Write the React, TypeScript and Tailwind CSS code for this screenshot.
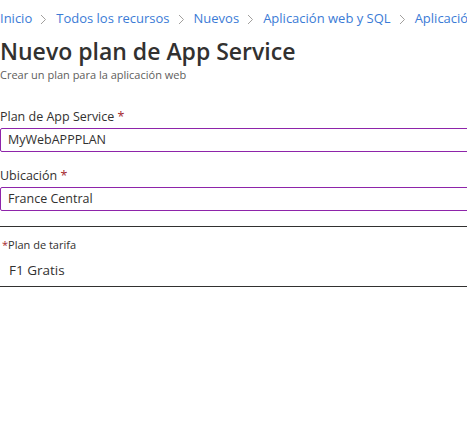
import React from "react";

const crumbs = ["Inicio", "Todos los recursos", "Nuevos", "Aplicación web y SQL", "Aplicación web"];

function Chevron() {
  return (
    <svg width="7" height="11" viewBox="0 0 7 11" className="ml-[8px] mr-[9px] shrink-0">
      <path d="M1 1l4.5 4.5L1 10" fill="none" stroke="#a19f9d" strokeWidth="1" />
    </svg>
  );
}

function Field({ label, value }: { label: string; value: string }) {
  return (
    <div>
      <div className="text-[12.5px] leading-[18px] text-[#323130]">
        {label} <span className="text-[#a4262c]">*</span>
      </div>
      <div className="mt-[2px] w-[480px] h-[24px] border border-[#8e24aa] rounded-[2px] flex items-center pl-[7px] text-[12.5px] text-[#323130]">
        {value}
      </div>
    </div>
  );
}

export default function App() {
  return (
    <div className="w-[467px] h-[425px] bg-white overflow-hidden font-['Open_Sans',sans-serif]">
      <nav className="flex items-center whitespace-nowrap h-[38px] text-[13px] text-[#3b7bd6]">
        {crumbs.map((c, i) => (
          <React.Fragment key={c}>
            {i > 0 && <Chevron />}
            <span>{c}</span>
          </React.Fragment>
        ))}
      </nav>
      <h1 className="text-[23px] leading-[28px] font-semibold text-[#323130] -mt-[1px]">Nuevo plan de App Service</h1>
      <p className="text-[11px] leading-[14px] text-[#605e5c] mt-[3px]">Crear un plan para la aplicación web</p>

      <div className="mt-[26px] flex flex-col gap-[15px]">
        <Field label="Plan de App Service" value="MyWebAPPPLAN" />
        <Field label="Ubicación" value="France Central" />
      </div>

      <div className="mt-[15px] w-[480px] border-t border-b border-[#323130] h-[61px] pt-[11px]">
        <div className="text-[11px] leading-[14px] text-[#323130] pl-[2px]">
          <span className="text-[#a4262c]">*</span>Plan de tarifa
        </div>
        <div className="mt-[9px] pl-[9px] text-[13.5px] leading-[18px] text-[#323130]">F1 Gratis</div>
      </div>
    </div>
  );
}
